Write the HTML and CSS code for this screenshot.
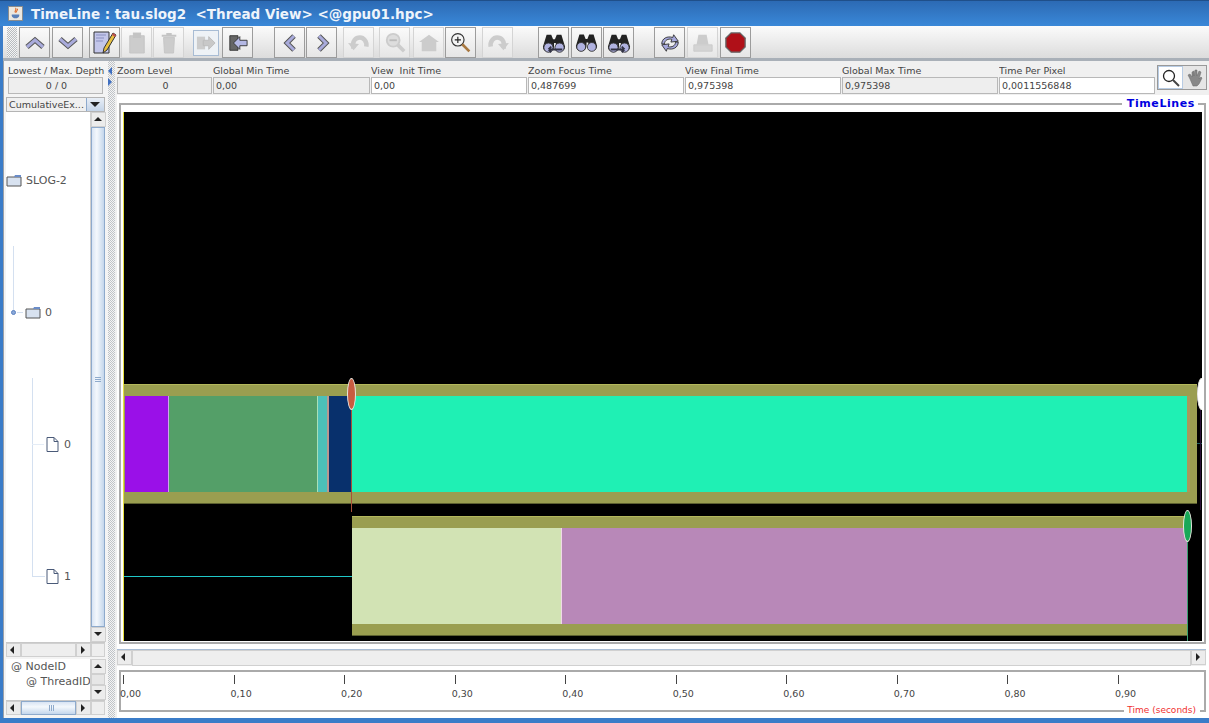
FILE: index.html
```html
<!DOCTYPE html>
<html lang="en">
<head>
    <meta charset="UTF-8">
    <title>TimeLine : tau.slog2</title>
    <link rel="stylesheet" href="styles.css">
</head>
<body>
    <div class="window">
        <div class="titlebar">
            <svg class="java-icon" width="15" height="15" viewBox="0 0 16 16">
                <rect x="0.5" y="0.5" width="15" height="15" fill="#ece8e0" stroke="#8a8a8a"/>
                <path d="M8 2c2 2-2 3 0 5M10 3c1 2-2 2-1 4" fill="none" stroke="#e07030" stroke-width="1.2"/>
                <path d="M4 9h8v1c0 2-2 3-4 3s-4-1-4-3z" fill="#5a80b8"/>
            </svg>
            <span class="title-text">TimeLine : tau.slog2  &lt;Thread View&gt; &lt;@gpu01.hpc&gt;</span>
        </div>

        <div class="toolbar">
            <div class="grip"></div>
            <div class="tool-group first">
                <button class="tool"><svg width="24" height="24" viewBox="0 0 24 24"><path d="M4 16l8-7 8 7" class="chev-o"/><path d="M4 16l8-7 8 7" class="chev-i"/></svg></button>
                <button class="tool"><svg width="24" height="24" viewBox="0 0 24 24"><path d="M4 8l8 7 8-7" class="chev-o"/><path d="M4 8l8 7 8-7" class="chev-i"/></svg></button>
            </div>
            <div class="tool-group g2">
                <button class="tool"><svg width="26" height="26" viewBox="0 0 26 26"><path d="M2 2h15v21H2z" fill="#c3c6ea" stroke="#333"/><path d="M4 5h10M4 8h8M4 11h7" stroke="#8a8fc0"/><path d="M21 3l3 2-9 15-4 3 1-5z" fill="#e8c040" stroke="#333"/><path d="M21 3l3 2-1 2-3-2z" fill="#c05050"/></svg></button>
                <button class="tool off"><svg width="20" height="24" viewBox="0 0 22 26"><path d="M3 5h16v19H3z" fill="#ccc" stroke="#c4c4c4"/><rect x="7" y="2" width="8" height="5" fill="#c4c4c4" stroke="#c4c4c4"/></svg></button>
                <button class="tool off"><svg width="20" height="24" viewBox="0 0 22 26"><path d="M5 7h12l-1 17H6z" fill="#ccc" stroke="#c4c4c4"/><path d="M3 5h16M8 3h6" stroke="#c4c4c4" stroke-width="2"/></svg></button>
            </div>
            <div class="tool-group g3">
                <button class="tool off picked"><svg width="20" height="20" viewBox="0 0 22 22"><path d="M1 4h9v14H1z" fill="#ccc"/><path d="M8 8h6V4l7 7-7 7v-4H8z" fill="#c8c8c8" stroke="#bbb"/></svg></button>
                <button class="tool"><svg width="22" height="20" viewBox="0 0 24 22"><path d="M3 3h9v16H3z" fill="#666" stroke="#333"/><path d="M22 8h-8V4l-7 7 7 7v-4h8z" fill="#b4b8e4" stroke="#333"/></svg></button>
            </div>
            <div class="tool-group g4">
                <button class="tool"><svg width="24" height="24" viewBox="0 0 24 24"><path d="M16 5l-7 7 7 7" class="chev-o"/><path d="M16 5l-7 7 7 7" class="chev-i"/></svg></button>
                <button class="tool"><svg width="24" height="24" viewBox="0 0 24 24"><path d="M9 5l7 7-7 7" class="chev-o"/><path d="M9 5l7 7-7 7" class="chev-i"/></svg></button>
            </div>
            <div class="tool-group g5">
                <button class="tool off"><svg width="22" height="20" viewBox="0 0 24 22"><path d="M6 17c-2-9 3-12 7-12s8 4 7 10" fill="none" stroke="#ccc" stroke-width="5"/><path d="M0 11l6 8 6-7z" fill="#ccc"/></svg></button>
                <button class="tool off gap-a"><svg width="22" height="22" viewBox="0 0 24 24"><circle cx="10" cy="9" r="7" fill="#ddd" stroke="#ccc" stroke-width="2"/><path d="M6 9h8" stroke="#bbb" stroke-width="2"/><path d="M15 14l7 7" stroke="#ccc" stroke-width="4"/></svg></button>
                <button class="tool off gap-b"><svg width="22" height="20" viewBox="0 0 24 22"><path d="M1 10L12 2l11 8zM4 10h16v10H4z" fill="#ccc"/></svg></button>
                <button class="tool"><svg width="23" height="23" viewBox="0 0 26 26"><circle cx="10" cy="10" r="7" fill="#f4f4f4" stroke="#333" stroke-width="1.3"/><path d="M6.5 10h7M10 6.5v7" stroke="#222" stroke-width="1.3"/><path d="M15 15l8 8" stroke="#a87840" stroke-width="3"/></svg></button>
                <button class="tool off gap-c"><svg width="22" height="20" viewBox="0 0 24 22"><path d="M18 17c2-9-3-12-7-12S3 9 4 15" fill="none" stroke="#ccc" stroke-width="5"/><path d="M24 11l-6 8-6-7z" fill="#ccc"/></svg></button>
            </div>
            <div class="tool-group g6">
                <button class="tool"><svg width="24" height="24" viewBox="0 0 26 26"><use href="#binoculars"/><path d="M22 20H7m0 0l3-3m-3 3l3 3" fill="none" stroke="#334" stroke-width="2"/></svg></button>
                <button class="tool"><svg width="23" height="23" viewBox="0 0 26 26"><use href="#binoculars"/></svg></button>
                <button class="tool"><svg width="24" height="24" viewBox="0 0 26 26"><use href="#binoculars"/><path d="M4 20h15m0 0l-3-3m3 3l-3 3" fill="none" stroke="#334" stroke-width="2"/></svg></button>
            </div>
            <div class="tool-group g7">
                <button class="tool"><svg width="22" height="22" viewBox="0 0 24 24"><path d="M3 13c0-6 6-9 12-7l1-3 5 7-8 1 1-3c-4-1-8 1-8 5z" fill="#a6a8dc" stroke="#333"/><path d="M21 11c0 6-6 9-12 7l-1 3-5-7 8-1-1 3c4 1 8-1 8-5z" fill="#a6a8dc" stroke="#333"/></svg></button>
                <button class="tool off"><svg width="22" height="22" viewBox="0 0 24 24"><path d="M7 3h9l2 11H5z" fill="#ccc"/><path d="M2 14h20v7H2z" fill="#d4d4d4" stroke="#ccc"/></svg></button>
                <button class="tool"><svg width="21" height="21" viewBox="0 0 24 24"><path d="M7 1h10l6 6v10l-6 6H7l-6-6V7z" fill="#b01018" stroke="#666" stroke-width="1.5"/></svg></button>
            </div>
        </div>

        <svg class="defs" width="0" height="0">
            <symbol id="binoculars" viewBox="0 0 26 26">
                <path d="M5 4h5l2 5h2l2-5h5l4 13a5 5 0 0 1-10 0v-4h-2v4A5 5 0 0 1 1 17z" fill="#222"/>
                <circle cx="7" cy="18" r="5" fill="#b0b2e0" stroke="#333"/>
                <circle cx="19" cy="18" r="5" fill="#b0b2e0" stroke="#333"/>
            </symbol>
        </svg>

        <div class="main">
            <div class="left">
                <div class="depth">
                    <div class="lbl">Lowest / Max. Depth</div>
                    <div class="field grey center">0 / 0</div>
                </div>
                <div class="combo">
                    <span class="combo-text">CumulativeEx...</span>
                    <span class="combo-arrow"></span>
                </div>
                <div class="tree-wrap">
                    <div class="tree">
                        <div class="node n0">
                            <svg width="16" height="13" viewBox="0 0 16 13"><use href="#folder"/></svg>
                            <span>SLOG-2</span>
                        </div>
                        <div class="node n1">
                            <span class="knob"></span>
                            <svg width="16" height="13" viewBox="0 0 16 13"><use href="#folder"/></svg>
                            <span>0</span>
                        </div>
                        <div class="node n2">
                            <svg width="13" height="15" viewBox="0 0 13 15"><use href="#leaf"/></svg>
                            <span>0</span>
                        </div>
                        <div class="node n3">
                            <svg width="13" height="15" viewBox="0 0 13 15"><use href="#leaf"/></svg>
                            <span>1</span>
                        </div>
                    </div>
                    <div class="vscroll">
                        <div class="sb-btn up"></div>
                        <div class="thumb-v tall"></div>
                        <div class="sb-btn down"></div>
                    </div>
                </div>
                <div class="hscroll small">
                    <div class="sb-btn left-arrow"></div>
                    <div class="track"></div>
                    <div class="sb-btn right-arrow"></div>
                    <div class="corner"></div>
                </div>
                <div class="list-wrap">
                    <div class="list">
                        <div>@ NodeID</div>
                        <div class="indent">@ ThreadID</div>
                    </div>
                    <div class="vscroll">
                        <div class="sb-btn up"></div>
                        <div class="mini-thumb"></div>
                        <div class="sb-btn down"></div>
                    </div>
                </div>
                <div class="hscroll small">
                    <div class="sb-btn left-arrow"></div>
                    <div class="thumb-h"></div>
                    <div class="sb-btn right-arrow"></div>
                    <div class="corner"></div>
                </div>
            </div>

            <div class="splitter"></div>

            <div class="right">
                <div class="infobar">
                    <div class="info w95"><div class="lbl">Zoom Level</div><div class="field grey center">0</div></div>
                    <div class="info w157"><div class="lbl">Global Min Time</div><div class="field grey">0,00</div></div>
                    <div class="info w156"><div class="lbl">View&nbsp; Init Time</div><div class="field">0,00</div></div>
                    <div class="info w156"><div class="lbl">Zoom Focus Time</div><div class="field">0,487699</div></div>
                    <div class="info w156"><div class="lbl">View Final Time</div><div class="field">0,975398</div></div>
                    <div class="info w156"><div class="lbl">Global Max Time</div><div class="field grey">0,975398</div></div>
                    <div class="info w156"><div class="lbl">Time Per Pixel</div><div class="field">0,0011556848</div></div>
                    <div class="mode">
                        <div class="mode-btn on"><svg width="18" height="18" viewBox="0 0 18 18"><circle cx="7" cy="7" r="5.5" fill="#fff" stroke="#222" stroke-width="1.3"/><path d="M11 11l6 6" stroke="#444" stroke-width="2"/></svg></div>
                        <div class="mode-btn"><svg width="18" height="18" viewBox="0 0 18 18"><path d="M4 10L2 6l2-1 2 3V3l2-1v5l1-6h2v6l2-5 2 1-2 7 2-2 1 1-3 6-2 2H7z" fill="#888" stroke="#666" stroke-width=".5"/></svg></div>
                    </div>
                </div>

                <div class="timelines">
                    <span class="legend">TimeLines</span>
                    <div class="canvas">
                        <div class="cyan-line"></div>
                        <div class="state-outer top">
                            <div class="state-inner">
                                <div class="seg purple"></div>
                                <div class="seg green"></div>
                                <div class="seg teal"></div>
                                <div class="seg pinkline"></div>
                                <div class="seg navy"></div>
                                <div class="seg mint"></div>
                                <div class="seg edge"></div>
                            </div>
                        </div>
                        <div class="state-outer bottom">
                            <div class="state-inner">
                                <div class="seg pale"></div>
                                <div class="seg mauve"></div>
                            </div>
                        </div>
                        <div class="arrow-line"></div>
                        <div class="end-line"></div>
                        <div class="right-tick"></div>
                        <div class="right-line"></div>
                        <div class="oval red"></div>
                        <div class="oval white"></div>
                        <div class="oval emerald"></div>
                    </div>
                </div>

                <div class="hscroll wide">
                    <div class="sb-btn left-arrow"></div>
                    <div class="track"></div>
                    <div class="sb-btn right-arrow"></div>
                </div>

                <div class="ruler">
                    <div class="mark"><i></i><span>0,00</span></div>
                    <div class="mark"><i></i><span>0,10</span></div>
                    <div class="mark"><i></i><span>0,20</span></div>
                    <div class="mark"><i></i><span>0,30</span></div>
                    <div class="mark"><i></i><span>0,40</span></div>
                    <div class="mark"><i></i><span>0,50</span></div>
                    <div class="mark"><i></i><span>0,60</span></div>
                    <div class="mark"><i></i><span>0,70</span></div>
                    <div class="mark"><i></i><span>0,80</span></div>
                    <div class="mark"><i></i><span>0,90</span></div>
                    <span class="ruler-title">Time (seconds)</span>
                </div>
            </div>
        </div>

        <svg class="defs" width="0" height="0">
            <symbol id="folder" viewBox="0 0 16 13">
                <path d="M1 3h14v9H1z" fill="#d8e2f0" stroke="#555"/>
                <path d="M9 1h6v2H8z" fill="#6a8cc8"/>
            </symbol>
            <symbol id="leaf" viewBox="0 0 13 15">
                <path d="M1 .5h7l4 4v10H1z" fill="#fff" stroke="#4a5a78"/>
                <path d="M8 .5v4h4" fill="none" stroke="#4a5a78"/>
            </symbol>
        </svg>
    </div>
</body>
</html>
```
FILE: styles.css
```css
/* Whole window */
html, body {
    margin: 0;
    padding: 0;
    overflow: hidden;
}

body {
    font-family: 'DejaVu Sans', sans-serif;
    font-size: 9.5px;
    color: #444;
}

.window {
    width: 1209px;
    height: 723px;
    box-sizing: border-box;
    display: flex;
    flex-direction: column;
    background: #f4f4f4;
    border-left: 3px solid #3a7cc8;
    border-bottom: 5px solid #3a7cc8;
    position: relative;
}

.defs {
    position: absolute;
}

/* Title bar */
.titlebar {
    height: 26px;
    margin-left: -3px;
    flex: none;
    display: flex;
    align-items: center;
    gap: 8px;
    padding-left: 8px;
    background: linear-gradient(#2c6ab4, #3a88d8);
    border-top: 1px solid #1f4f8a;
    box-sizing: border-box;
}

.title-text {
    color: #eef4fb;
    font-weight: bold;
    font-size: 13.5px;
    white-space: pre;
}

/* Toolbar */
.toolbar {
    height: 35px;
    flex: none;
    display: flex;
    align-items: flex-start;
    padding-top: 1px;
    box-sizing: border-box;
    background: linear-gradient(#fbfbfb, #dcdcdc);
    border-bottom: 3px solid #a9b0b8;
}

.grip {
    width: 10px;
    height: 30px;
    margin-left: 4px;
    background: repeating-conic-gradient(#b8bcc0 0 25%, #f4f4f4 0 50%) 0 0 / 2px 2px;
}

.tool-group {
    display: flex;
    gap: 1px;
}

.first { margin-left: 2px; gap: 2px; }
.g2 { margin-left: 6px; }
.g3 { margin-left: 9px; gap: 3px; }
.g4 { margin-left: 21px; }
.g5 { margin-left: 6px; }
.g6 { margin-left: 25px; gap: 1.5px; }
.g7 { margin-left: 20px; gap: 2px; }
.gap-a { margin-left: 4px; }
.gap-b { margin-left: 2px; }
.gap-c { margin-left: 5px; }

.tool {
    width: 31px;
    height: 31px;
    padding: 0;
    display: flex;
    align-items: center;
    justify-content: center;
    background: linear-gradient(#fafafa, #e6e6e6);
    border: 1px solid #9c9c9c;
    border-radius: 0;
}

.tool.off {
    border-color: #d4d4d4;
}

.tool.picked {
    width: 26px;
    height: 26px;
    margin-top: 3px;
    background: #eef2f6;
    border-color: #a8bcd4;
}

.chev-o {
    fill: none;
    stroke: #555;
    stroke-width: 5;
}

.chev-i {
    fill: none;
    stroke: #a9abdb;
    stroke-width: 3;
}

/* Main area */
.main {
    flex: 1;
    min-height: 0;
    display: flex;
}

.left {
    width: 103px;
    flex: none;
    padding: 3px 1px 0 2px;
    box-sizing: border-box;
    border-left: 1px solid #9aa0a8;
    display: flex;
    flex-direction: column;
}

.splitter {
    width: 10px;
    flex: none;
    margin-left: 1px;
    box-sizing: border-box;
    background: repeating-conic-gradient(#c0c4c8 0 25%, #f4f4f4 0 50%) 0 0 / 2px 2px;
    border-left: 1px solid #f4f4f4;
    border-right: 2px solid #f0f0f0;
    position: relative;
}

.splitter::before {
    content: "";
    position: absolute;
    left: 0;
    top: 6px;
    border-top: 4px solid transparent;
    border-bottom: 4px solid transparent;
    border-right: 4px solid #3f6fc0;
}

.splitter::after {
    content: "";
    position: absolute;
    left: 0;
    top: 17px;
    border-top: 4px solid transparent;
    border-bottom: 4px solid transparent;
    border-left: 4px solid #3f6fc0;
}

.lbl {
    height: 13px;
    line-height: 13px;
    white-space: nowrap;
    overflow: hidden;
}

.field {
    height: 17px;
    line-height: 15px;
    box-sizing: border-box;
    border: 1px solid #b8b8b8;
    background: #fff;
    padding-left: 2px;
    white-space: nowrap;
}

.field.grey {
    background: #eeeeee;
}

.center {
    text-align: center;
}

.depth {
    height: 31px;
    padding-left: 2px;
    flex: none;
}

.depth .lbl {
    letter-spacing: -0.05px;
}

.depth .field {
    margin-right: 2px;
}

.combo {
    height: 15px;
    flex: none;
    margin-top: 2px;
    display: flex;
    border: 1px solid #b4b4b4;
    box-sizing: border-box;
    background: #f0f0f0;
}

.combo-text {
    flex: 1;
    padding-left: 2px;
    line-height: 13px;
    overflow: hidden;
    white-space: nowrap;
}

.combo-arrow {
    width: 17px;
    flex: none;
    background: linear-gradient(#e8eef6, #c4d4e8);
    border-left: 1px solid #8eaacc;
    position: relative;
}

.combo-arrow::after {
    content: "";
    position: absolute;
    left: 3px;
    top: 4px;
    border-left: 5px solid transparent;
    border-right: 5px solid transparent;
    border-top: 5px solid #222;
}

/* Tree of timelines */
.tree-wrap {
    height: 530px;
    flex: none;
    display: flex;
    background: #fff;
}

.tree {
    flex: 1;
    padding-top: 2px;
    font-size: 11px;
    color: #555;
}

.node {
    height: 132px;
    display: flex;
    align-items: center;
    gap: 4px;
    position: relative;
    box-sizing: border-box;
}

.n0 { padding-left: 0; }
.n1 { padding-left: 19px; }
.n2, .n3 { padding-left: 40px; gap: 5px; }

.n1::before {
    content: "";
    position: absolute;
    left: 7px;
    top: 0;
    height: 66px;
    border-left: 1px solid #d4e0f0;
}

.n2::before {
    content: "";
    position: absolute;
    left: 26px;
    top: 0;
    bottom: 0;
    border-left: 1px solid #d4e0f0;
}

.n3::before {
    content: "";
    position: absolute;
    left: 26px;
    top: 0;
    height: 66px;
    width: 12px;
    border-left: 1px solid #d4e0f0;
    border-bottom: 1px solid #d4e0f0;
}

.n2::after {
    content: "";
    position: absolute;
    left: 26px;
    top: 66px;
    width: 12px;
    border-top: 1px solid #e4ecf6;
}

.knob {
    position: absolute;
    left: 5px;
    top: 64px;
    width: 3px;
    height: 3px;
    border-radius: 50%;
    border: 1px solid #5a80c0;
    background: #8aa8d8;
}

.n1::after {
    content: "";
    position: absolute;
    left: 11px;
    top: 66px;
    width: 6px;
    border-top: 1px solid #d4e0f0;
}

/* Scrollbars */
.vscroll {
    width: 15px;
    flex: none;
    display: flex;
    flex-direction: column;
    background: #eeeeee;
    border-left: 1px solid #d0d0d0;
    box-sizing: border-box;
}

.sb-btn {
    flex: none;
    width: 15px;
    height: 15px;
    background: #ececec;
    border: 1px solid #d0d0d0;
    box-sizing: border-box;
    position: relative;
}

.sb-btn::after {
    content: "";
    position: absolute;
}

.up::after {
    left: 2px;
    top: 4px;
    border-left: 4px solid transparent;
    border-right: 4px solid transparent;
    border-bottom: 4px solid #222;
}

.down::after {
    left: 2px;
    top: 4px;
    border-left: 4px solid transparent;
    border-right: 4px solid transparent;
    border-top: 4px solid #222;
}

.left-arrow::after {
    left: 3px;
    top: 2px;
    border-top: 4px solid transparent;
    border-bottom: 4px solid transparent;
    border-right: 4px solid #222;
}

.right-arrow::after {
    left: 4px;
    top: 2px;
    border-top: 4px solid transparent;
    border-bottom: 4px solid transparent;
    border-left: 4px solid #222;
}

.thumb-v {
    flex: 1;
    background: linear-gradient(90deg, #d8e4f4, #f4f8fc 40%, #c4d6ec);
    border: 1px solid #8eaacc;
    position: relative;
}

.thumb-v::after {
    content: "";
    position: absolute;
    left: 3px;
    right: 3px;
    top: 50%;
    height: 5px;
    background: repeating-linear-gradient(#8eaacc 0 1px, transparent 1px 2px);
}

.mini-thumb {
    flex: 1;
    background: #e6e6e6;
    border: 1px solid #d0d0d0;
}

.hscroll {
    display: flex;
    flex: none;
    background: #eeeeee;
}

.hscroll.small {
    height: 15px;
    box-sizing: border-box;
    border-top: 1px solid #c8c8c8;
}

.hscroll.small .sb-btn {
    height: 14px;
}

.hscroll .track {
    flex: 1;
    border: 1px solid #d0d0d0;
}

.thumb-h {
    flex: 1;
    background: linear-gradient(#d8e4f4, #f4f8fc 40%, #c4d6ec);
    border: 1px solid #8eaacc;
    position: relative;
}

.thumb-h::after {
    content: "";
    position: absolute;
    top: 3px;
    bottom: 3px;
    left: 50%;
    width: 5px;
    background: repeating-linear-gradient(90deg, #8eaacc 0 1px, transparent 1px 2px);
}

.corner {
    width: 14px;
    flex: none;
    border: 1px solid #d0d0d0;
    box-sizing: border-box;
}

.list-wrap {
    height: 41px;
    margin-top: 2px;
    flex: none;
    display: flex;
    background: #fff;
}

.list {
    flex: 1;
    overflow: hidden;
    font-size: 11px;
    line-height: 15px;
    padding-left: 5px;
    white-space: nowrap;
    color: #555;
}

.indent {
    padding-left: 15px;
}

/* Right side */
.right {
    flex: 1;
    min-width: 0;
    display: flex;
    flex-direction: column;
    padding-right: 3px;
    background: #fff;
}

.infobar {
    display: flex;
    gap: 1px;
    height: 31px;
    flex: none;
    padding-top: 3px;
    margin-right: -3px;
    background: #f0f0f0;
}

.info {
    flex: none;
}

.w95 { width: 95px; }
.w157 { width: 157px; }
.w156 { width: 156px; }

.mode {
    width: 50px;
    height: 25px;
    margin: 1px 0 0 1px;
    flex: none;
    box-sizing: border-box;
    border: 1px solid #999;
    display: flex;
    background: #e6e6e6;
}

.mode-btn {
    flex: 1;
    display: flex;
    align-items: center;
    justify-content: center;
}

.mode-btn.on {
    background: #fff;
    border: 1px solid #b8cce4;
}

/* Timeline canvas */
.timelines {
    flex: none;
    height: 541px;
    margin: 8px 0 0 2px;
    padding: 7px 2px 0 2px;
    box-sizing: border-box;
    border: 2px solid #aaa;
    background: #fff;
    position: relative;
}

.legend {
    position: absolute;
    right: 6px;
    top: -8px;
    padding: 0 3px 0 5px;
    background: #fff;
    color: #0000e0;
    font-weight: bold;
    font-size: 11px;
    letter-spacing: 0.6px;
    line-height: 13px;
}

.canvas {
    height: 529px;
    background: #000;
    border-left: 1px solid #e8e040;
    position: relative;
    overflow: hidden;
}

.state-outer {
    position: absolute;
    height: 120px;
    box-sizing: border-box;
    background: #9a9e50;
    border-top: 1px solid #b4b85c;
    border-bottom: 1px solid #5c6030;
    padding-top: 11px;
}

.state-outer.top {
    left: 0;
    width: 1073px;
    top: 272px;
}

.state-outer.bottom {
    left: 228px;
    width: 835px;
    top: 404px;
}

.state-inner {
    height: 96px;
    display: flex;
}

.seg {
    height: 100%;
    flex: none;
    box-sizing: border-box;
}

.purple { width: 44px; margin-left: 1px; background: #9a10e8; border-right: 1px solid #d0a0f0; }
.green { width: 149px; background: #549f68; border-right: 1px solid #a8e0b8; }
.teal { width: 9px; background: #4cc0b8; }
.pinkline { width: 2px; background: #b89890; }
.navy { width: 23px; background: #08306c; }
.mint { width: 835px; background: #1ff0b4; }
.edge { width: 3px; background: #a8985c; }
.pale { width: 210px; background: #d2e3b4; border-right: 1px solid #f0d8e8; }
.mauve { flex: 1; background: #b888b8; }

.cyan-line {
    position: absolute;
    left: 0;
    top: 464px;
    width: 228px;
    border-top: 1px solid #20c8c8;
}

.arrow-line {
    position: absolute;
    left: 227px;
    top: 297px;
    height: 103px;
    border-left: 1px solid #a85038;
}

.end-line {
    position: absolute;
    left: 1063px;
    top: 430px;
    height: 99px;
    border-left: 1px solid #38a070;
}

.right-tick {
    position: absolute;
    left: 1073px;
    top: 331px;
    width: 5px;
    border-top: 1px solid #206060;
}

.right-line {
    position: absolute;
    left: 1076px;
    top: 298px;
    height: 100px;
    border-left: 1px solid #2a1038;
}

.oval {
    position: absolute;
    width: 9px;
    height: 32px;
    box-sizing: border-box;
    border-radius: 50%;
    border: 1px solid #e8e8e0;
}

.red { left: 223px; top: 266px; background: #c85c40; }
.white { left: 1073px; top: 266px; background: #fff; }
.emerald { left: 1059px; top: 398px; background: #18a858; }

.hscroll.wide {
    height: 16px;
    margin: 5px 0 0 0;
    border-top: 1px solid #a8bcd4;
}

.hscroll.wide .sb-btn {
    height: 15px;
}

/* Time ruler */
.ruler {
    flex: 1;
    margin: 4px 0 6px 2px;
    padding: 3px 0 0 2px;
    box-sizing: border-box;
    border: 2px solid #aaa;
    background: #fff;
    display: flex;
    position: relative;
}

.mark {
    flex: none;
    width: 110.55px;
    font-size: 9.5px;
}

.mark i {
    display: block;
    width: 1px;
    height: 9px;
    background: #444;
}

.mark span {
    display: block;
    margin: 4px 0 0 -3px;
    line-height: 12px;
}

.ruler-title {
    position: absolute;
    right: 4px;
    bottom: -6px;
    padding: 0 4px 0 3px;
    background: #fff;
    color: #f03030;
    font-size: 9px;
    line-height: 11px;
}
```
